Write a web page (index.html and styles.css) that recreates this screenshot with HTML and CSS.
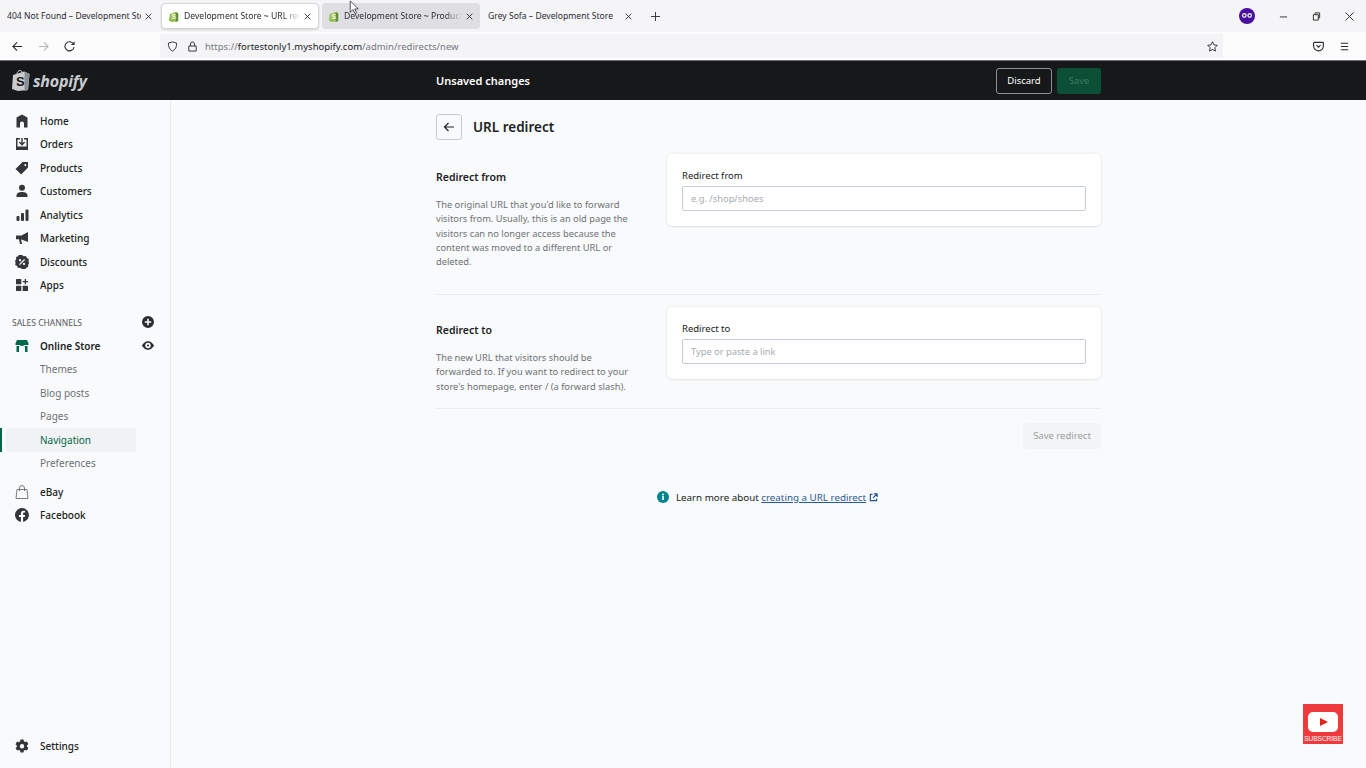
FILE: index.html
```html
<!DOCTYPE html>
<html lang="en">
<head>
    <meta charset="UTF-8">
    <meta name="viewport" content="width=device-width, initial-scale=1.0">
    <title>URL redirect</title>
    <link rel="stylesheet" href="styles.css">
</head>
<body>
    <div class="tabstrip">
        <div class="tab tab-plain tab-first">
            <span class="tab-title">404 Not Found – Development Store</span>
            <svg class="tab-close" viewBox="0 0 10 10"><path d="M1 1l8 8M9 1l-8 8"/></svg>
        </div>
        <div class="tab tab-active">
            <svg class="favicon" viewBox="0 0 12 13"><path d="M1 3.5L8 1l3 1.5V12L3.5 13 0 11.5z" fill="#95bf47"/><path d="M8 1l3 1.500V12l-3 1z" fill="#5e8e3e"/><text x="3" y="10" class="favicon-s">S</text></svg>
            <span class="tab-title tab-fade">Development Store ~ URL redirect</span>
            <svg class="tab-close" viewBox="0 0 10 10"><path d="M1 1l8 8M9 1l-8 8"/></svg>
        </div>
        <div class="tab tab-hover">
            <svg class="favicon" viewBox="0 0 12 13"><path d="M1 3.5L8 1l3 1.500V12L3.500 13 0 11.500z" fill="#95bf47"/><path d="M8 1l3 1.500V12l-3 1z" fill="#5e8e3e"/><text x="3" y="10" class="favicon-s">S</text></svg>
            <span class="tab-title tab-fade">Development Store ~ Products</span>
            <svg class="tab-close" viewBox="0 0 10 10"><path d="M1 1l8 8M9 1l-8 8"/></svg>
        </div>
        <div class="tab tab-plain">
            <span class="tab-title">Grey Sofa – Development Store</span>
            <svg class="tab-close" viewBox="0 0 10 10"><path d="M1 1l8 8M9 1l-8 8"/></svg>
        </div>
        <svg class="new-tab" viewBox="0 0 10 10"><path d="M5 0v10M0 5h10"/></svg>
        <div class="window-controls">
            <svg class="profile" viewBox="0 0 16 16"><circle cx="8" cy="8" r="8" fill="#4a0e9e"/><circle cx="5.300" cy="7.500" r="2.400" fill="#e6e0f2"/><circle cx="10.700" cy="7.500" r="2.400" fill="#e6e0f2"/><circle cx="5.300" cy="7.500" r="1" fill="#1b1033"/><circle cx="10.700" cy="7.500" r="1" fill="#1b1033"/></svg>
            <svg class="win-btn" viewBox="0 0 10 10"><path d="M1 5.500h8"/></svg>
            <svg class="win-btn" viewBox="0 0 10 10"><path d="M1.500 3h5.500v6h-5.500zM3.500 3V1h5v5.500h-1.500"/></svg>
            <svg class="win-btn" viewBox="0 0 10 10"><path d="M.5.500l9 9M9.500.500l-9 9"/></svg>
        </div>
    </div>

    <div class="toolbar">
        <svg class="tool" viewBox="0 0 12 12"><path d="M11 6H1M5.500 1.500L1 6l4.500 4.500"/></svg>
        <svg class="tool tool-off" viewBox="0 0 12 12"><path d="M1 6h10M6.500 1.500L11 6l-4.500 4.500"/></svg>
        <svg class="tool" viewBox="0 0 12 12"><path d="M10.500 3.500A5 5 0 1 0 11 6.500M11 .8v3h-3"/></svg>
        <div class="urlbar">
            <svg class="url-icon" viewBox="0 0 12 12"><path d="M6 1l4.500 1.300c0 4-1 7-4.500 8.700C2.500 9.300 1.500 6.300 1.500 2.300z"/></svg>
            <svg class="url-icon url-lock" viewBox="0 0 12 12"><path d="M2 5.500h8V11H2zM3.800 5.500V3.300a2.200 2.200 0 0 1 4.400 0v2.200"/></svg>
            <span class="url-text">https://<b>fortestonly1.myshopify.com</b>/admin/redirects/new</span>
            <svg class="url-icon url-star" viewBox="0 0 12 12"><path d="M6 .8l1.600 3.400 3.600.5-2.600 2.600.6 3.700L6 9.200 2.800 11l.6-3.700L.8 4.700l3.600-.5z"/></svg>
        </div>
        <svg class="tool tool-pocket" viewBox="0 0 12 12"><path d="M1.500 1.500h9a.8.8 0 0 1 .8.800v3.200a5.300 5.300 0 0 1-10.600 0V2.300a.8.8 0 0 1 .8-.8zM3.800 4.500L6 6.700l2.200-2.200"/></svg>
        <svg class="tool tool-menu" viewBox="0 0 12 12"><path d="M2 2.500h8M2 6h8M2 9.500h8"/></svg>
    </div>

    <header class="topbar">
        <div class="logo">
            <svg class="logo-bag" viewBox="0 0 18 21"><path d="M1 5L12 1.500 17.500 4 16 20 6 21 0 19z" fill="#c9cccf"/><path d="M12.500 1.500L17.500 4 16 20l-3.500 1z" fill="#8c9196"/><path d="M5 5V4c0-2 1.500-3.500 3-3.500S10.500 2 10.500 4" fill="none" stroke="#c9cccf"/><text x="4" y="16" class="logo-s">S</text></svg>
            <span class="logo-text">shopify</span>
        </div>
        <div class="topbar-inner">
            <span class="unsaved">Unsaved changes</span>
            <div class="topbar-actions">
                <button class="btn-discard">Discard</button>
                <button class="btn-save">Save</button>
            </div>
        </div>
    </header>

    <div class="app">
        <nav class="sidebar">
            <a class="nav-item"><svg class="nav-icon" viewBox="0 0 14 14"><path d="M7 .5L12.500 3.500V13.500H9V9.500a2 2 0 0 0-4 0v4H1.500V3.500z"/></svg>Home</a>
            <a class="nav-item"><svg class="nav-icon" viewBox="0 0 14 14"><path fill-rule="evenodd" d="M1 1h4v1.500H2.500v7h9v-7H9V1h4v12H1zM6.300 1h1.400v5l1.500-1.500 1 1L7 8.700 3.800 5.500l1-1L6.300 6z"/></svg>Orders</a>
            <a class="nav-item"><svg class="nav-icon" viewBox="0 0 14 14"><path fill-rule="evenodd" d="M7.500 1H13v5.500L6.200 13.500.5 8zM10.300 3a1 1 0 1 0 .01 0z"/></svg>Products</a>
            <a class="nav-item"><svg class="nav-icon" viewBox="0 0 14 14"><circle cx="7" cy="3.800" r="3"/><path d="M1.500 11.500C1.500 9 4 8 7 8s5.500 1 5.500 3.500v1.500h-11z"/></svg>Customers</a>
            <a class="nav-item"><svg class="nav-icon" viewBox="0 0 14 14"><rect x="1.500" y="8" width="3" height="5" rx="1"/><rect x="6" y="5" width="3" height="8" rx="1"/><rect x="10.500" y="1.500" width="3" height="11.500" rx="1"/></svg>Analytics</a>
            <a class="nav-item"><svg class="nav-icon" viewBox="0 0 14 14"><path d="M13 1v10L6.500 8.500 6 8.400l1 4.600H5L4 8.200H1V4.500h5.500z"/></svg>Marketing</a>
            <a class="nav-item"><svg class="nav-icon" viewBox="0 0 14 14"><path fill-rule="evenodd" d="M7 0l1.800 1.300 2.200-.2.800 2 2 1-.4 2.200 1 1.700-1.300 1.800.1 2.200-2 .8-1 1.900-2.200-.4L7 14l-1.800-1.300-2.200.2-.8-2-2-1 .4-2.200-.6-1.700 1.200-1.800-.1-2.200 2-.8 1-1.900 2.200.4zM9.200 4L4 9.200l.9.900L10 5zM5 4a1.100 1.100 0 1 0 .01 0zM9 7.800a1.100 1.100 0 1 0 .01 0z"/></svg>Discounts</a>
            <a class="nav-item"><svg class="nav-icon" viewBox="0 0 14 14"><rect x="1" y="1" width="5.300" height="5.300" rx=".6"/><rect x="1" y="7.700" width="5.300" height="5.300" rx=".6"/><rect x="7.700" y="7.700" width="5.300" height="5.300" rx=".6"/><path d="M9.700 1h1.300v2h2v1.300h-2v2H9.700v-2h-2V3h2z"/></svg>Apps</a>

            <div class="channels-head">
                <span>SALES CHANNELS</span>
                <svg class="side-action" viewBox="0 0 12 12"><path fill-rule="evenodd" d="M6 0a6 6 0 1 1 0 12A6 6 0 0 1 6 0zM5.200 2.800v2.400H2.800v1.600h2.400v2.400h1.600V6.800h2.400V5.200H6.800V2.800z"/></svg>
            </div>
            <a class="nav-item nav-store"><svg class="nav-icon nav-icon-green" viewBox="0 0 14 14"><path d="M2 1h10l1.500 3.500V6H.500V4.500z"/><path d="M1.500 7h2.500v6H1.500zM10 7h2.500v6H10zM4 7h6v2a3 3 0 0 0-6 0z"/></svg>Online Store
                <svg class="side-action side-eye" viewBox="0 0 14 10"><path fill-rule="evenodd" d="M7 0c3.500 0 6 3 7 5-1 2-3.500 5-7 5S1 7 0 5c1-2 3.500-5 7-5zm0 1.800a3.200 3.200 0 1 0 0 6.400 3.200 3.200 0 0 0 0-6.400zM7 3.800a1.200 1.200 0 1 1 0 2.400 1.200 1.200 0 0 1 0-2.400z"/></svg>
            </a>
            <a class="sub-item">Themes</a>
            <a class="sub-item">Blog posts</a>
            <a class="sub-item">Pages</a>
            <a class="sub-item sub-current">Navigation</a>
            <a class="sub-item">Preferences</a>
            <a class="nav-item nav-ebay"><svg class="nav-icon nav-icon-line" viewBox="0 0 14 14"><path d="M2 4.500h10l1 9H1zM4.500 6V3a2.500 2.500 0 0 1 5 0v3"/></svg>eBay</a>
            <a class="nav-item"><svg class="nav-icon" viewBox="0 0 14 14"><path d="M14 7a7 7 0 1 0-8.100 6.900V9H4V7h1.900V5.500c0-1.800 1-2.700 2.700-2.700.8 0 1.500.1 1.500.1v1.700h-.9c-.8 0-1.100.5-1.100 1V7h2l-.3 2H8.100v4.900A7 7 0 0 0 14 7z"/></svg>Facebook</a>
            <a class="nav-item nav-settings"><svg class="nav-icon" viewBox="0 0 14 14"><path fill-rule="evenodd" d="M5.500.500h3l.4 1.800 1.300.7 1.700-.6 1.500 2.600-1.300 1.200v1.500l1.300 1.200-1.500 2.600-1.700-.6-1.300.7-.4 1.800h-3l-.4-1.800-1.300-.7-1.700.6L.5 9.100l1.300-1.200V6.400L.5 5.200 2 2.600l1.700.6 1.300-.7zM7 5a2.200 2.200 0 1 0 0 4.400A2.200 2.200 0 0 0 7 5z"/></svg>Settings</a>
        </nav>

        <main class="content">
            <div class="page-head">
                <button class="back-btn"><svg viewBox="0 0 12 12"><path d="M11 6H1.500M5.500 2L1.500 6l4 4"/></svg></button>
                <h1>URL redirect</h1>
            </div>

            <section class="form-row form-row-first">
                <div class="form-info">
                    <h2>Redirect from</h2>
                    <p>The original URL that you'd like to forward visitors from. Usually, this is an old page the visitors can no longer access because the content was moved to a different URL or deleted.</p>
                </div>
                <div class="card">
                    <label class="field-label">Redirect from</label>
                    <input class="field-input" placeholder="e.g. /shop/shoes">
                </div>
            </section>

            <section class="form-row">
                <div class="form-info">
                    <h2>Redirect to</h2>
                    <p>The new URL that visitors should be forwarded to. If you want to redirect to your store's homepage, enter / (a forward slash).</p>
                </div>
                <div class="card">
                    <label class="field-label">Redirect to</label>
                    <input class="field-input" placeholder="Type or paste a link">
                </div>
            </section>

            <div class="form-actions">
                <button class="btn-redirect">Save redirect</button>
            </div>

            <div class="learn-more">
                <svg class="info-icon" viewBox="0 0 12 12"><circle cx="6" cy="6" r="6" fill="#00848e"/><rect x="5.200" y="5" width="1.600" height="4" fill="#fff"/><circle cx="6" cy="3.400" r="1" fill="#fff"/></svg>
                <span>Learn more about <a class="learn-link">creating a URL redirect</a></span>
                <svg class="ext-icon" viewBox="0 0 10 10"><path d="M4 1.500H1.500v7h7V6M5.500 1h3.500v3.500M9 1L4.500 5.500"/></svg>
            </div>
        </main>
    </div>

    <svg class="cursor" viewBox="0 0 10 16"><path d="M1 1v12l3-2.800 2 4.300 1.800-.8-2-4.200H9.500z"/></svg>

    <div class="subscribe">
        <svg viewBox="0 0 30 20"><rect width="30" height="20" rx="5" fill="#fff"/><path d="M12 6l8 4-8 4z" fill="#e62117"/></svg>
        <span>SUBSCRIBE</span>
    </div>
</body>
</html>
```

FILE: styles.css
```css
* {
    box-sizing: border-box;
}

html, body {
    height: 100%;
}

body {
    margin: 0;
    font-family: "Noto Sans", "Open Sans", sans-serif;
    font-size: 10px;
    background: #f9fafb;
    color: #202223;
    display: flex;
    flex-direction: column;
    height: 100vh;
    overflow: hidden;
    position: relative;
}

svg {
    display: block;
    flex-shrink: 0;
}

/* browser tabs */
.tabstrip {
    height: 32px;
    background: #f5f5f7;
    display: flex;
    align-items: center;
    flex-shrink: 0;
}

.tab {
    height: 26px;
    display: flex;
    align-items: center;
    width: 158px;
    padding: 0 7px;
    margin-right: 2px;
    font-size: 9px;
    border-radius: 4px;
    color: #2b2a33;
    white-space: nowrap;
}

.tab-first {
    width: 159px;
}

.tab-active {
    background: #fff;
    border: 1px solid #d6d6da;
    box-shadow: 0 1px 2px rgba(0, 0, 0, 0.15);
}

.tab-hover {
    background: #dfdfe3;
    margin-left: 1px;
    margin-right: 1px;
}

.tab-title {
    flex: 1;
    overflow: hidden;
    font-size: 8.6px;
}

.tab-fade {
    -webkit-mask-image: linear-gradient(to right, #000 85%, transparent);
    mask-image: linear-gradient(to right, #000 85%, transparent);
}

.tab-close {
    width: 7px;
    height: 7px;
    margin-left: 4px;
    fill: none;
    stroke: #222;
    stroke-width: 1.2;
}

.favicon {
    width: 10px;
    height: 11px;
    margin-right: 5px;
}

.favicon-s {
    font-size: 8px;
    font-weight: 700;
    fill: #fff;
    font-family: "Liberation Sans", sans-serif;
}

.new-tab {
    width: 9px;
    height: 9px;
    margin-left: 10px;
    fill: none;
    stroke: #2b2a33;
}

.window-controls {
    margin-left: auto;
    display: flex;
    align-items: center;
}

.profile {
    width: 16px;
    height: 16px;
    margin-right: 24px;
}

.win-btn {
    width: 9px;
    height: 9px;
    margin-right: 24px;
    fill: none;
    stroke: #222;
    stroke-width: 1;
}

.win-btn:last-child {
    margin-right: 12px;
}

/* browser toolbar */
.toolbar {
    height: 28px;
    background: #fcfcfd;
    display: flex;
    align-items: center;
    padding-left: 12px;
    flex-shrink: 0;
}

.tool {
    width: 11px;
    height: 11px;
    margin-right: 15px;
    fill: none;
    stroke: #2b2a33;
    stroke-width: 1.200;
}

.tool-off {
    stroke: #b8b8bc;
}

.urlbar {
    width: 1063px;
    height: 24px;
    margin-left: 64px;
    margin-left: 75px;
    background: #f4f4f7;
    display: flex;
    align-items: center;
    padding-left: 7px;
    margin-left: 70px;
}

.url-icon {
    width: 11px;
    height: 11px;
    fill: none;
    stroke: #2b2a33;
    stroke-width: 1;
}

.url-lock {
    margin-left: 9px;
    margin-right: 7px;
}

.url-text {
    font-size: 9.500px;
    color: #77777d;
}

.url-text b {
    font-weight: 400;
    color: #202124;
}

.url-star {
    margin-left: auto;
    margin-right: 5px;
}

.tool-pocket {
    margin-left: 90px;
    margin-right: 15px;
}

.tool-menu {
    margin-right: 0;
}

/* dark bar */
.topbar {
    height: 40px;
    background: #16181a;
    border-top: 1px solid #6d7175;
    display: flex;
    align-items: center;
    flex-shrink: 0;
    position: relative;
}

.logo {
    width: 170px;
    display: flex;
    align-items: center;
    padding-left: 12px;
    color: #c9cccf;
    gap: 3px;
}

.logo-bag {
    width: 18px;
    height: 21px;
}

.logo-s {
    font-size: 13px;
    font-weight: 700;
    fill: #16181a;
    font-family: "Liberation Sans", sans-serif;
}

.logo-text {
    font-family: "Open Sans", sans-serif;
    font-size: 16px;
    font-weight: 700;
    font-style: italic;
    letter-spacing: -0.200px;
}

.topbar-inner {
    width: 665px;
    margin-left: 266px;
    display: flex;
    align-items: center;
    justify-content: space-between;
}

.unsaved {
    color: #fff;
    font-size: 11px;
    font-weight: 600;
}

.topbar-actions {
    display: flex;
    gap: 5px;
}

.btn-discard, .btn-save {
    font-family: inherit;
    font-size: 9.500px;
    height: 26px;
    border-radius: 3px;
}

.btn-discard {
    width: 56px;
    background: transparent;
    border: 1px solid #8c9196;
    color: #fff;
}

.btn-save {
    width: 44px;
    background: #0b4f37;
    border: none;
    color: #3f7a62;
}

/* admin layout */
.app {
    flex: 1;
    display: flex;
    min-height: 0;
}

.sidebar {
    width: 171px;
    flex-shrink: 0;
    border-right: 1px solid #ebecee;
    padding-top: 9px;
    padding-bottom: 10px;
    display: flex;
    flex-direction: column;
}

.nav-item {
    height: 23.500px;
    display: flex;
    align-items: center;
    padding-left: 15px;
    font-size: 10px;
    font-weight: 500;
    color: #202223;
}

.nav-icon {
    width: 14px;
    height: 14px;
    margin-right: 11px;
    fill: #33373b;
}

.nav-icon-green {
    fill: #00684a;
}

.nav-icon-line {
    fill: none;
    stroke: #5c5f62;
    stroke-width: 0.800;
}

.channels-head {
    height: 24px;
    margin-top: 13px;
    padding: 0 16px 0 12px;
    display: flex;
    align-items: center;
    justify-content: space-between;
    font-size: 8.500px;
    color: #54575a;
}

.side-action {
    width: 12px;
    height: 12px;
    fill: #2b2e30;
}

.side-eye {
    height: 9px;
    margin-left: auto;
    margin-right: 16px;
}

.nav-store {
    font-weight: 600;
}

.sub-item {
    height: 23.500px;
    display: flex;
    align-items: center;
    padding-left: 40px;
    font-size: 10px;
    color: #6d7175;
    position: relative;
}

.sub-current {
    color: #00684a;
    background: #f1f2f3;
    margin-left: 6px;
    margin-right: 34px;
    padding-left: 34px;
    border-radius: 3px;
}

.sub-current::before {
    content: "";
    position: absolute;
    left: -6px;
    top: 0;
    bottom: 0;
    width: 2px;
    background: #00684a;
}

.nav-ebay {
    margin-top: 5px;
}

.nav-settings {
    margin-top: auto;
}

/* main column */
.content {
    flex: 1;
    display: flex;
    flex-direction: column;
    align-items: center;
}

.page-head, .form-row, .form-actions {
    width: 665px;
}

.page-head {
    height: 42px;
    padding-top: 12px;
    display: flex;
    align-items: center;
    gap: 11px;
}

.back-btn {
    width: 26px;
    height: 26px;
    padding: 0;
    background: transparent;
    border: 1px solid #c9cccf;
    border-radius: 3px;
    display: flex;
    align-items: center;
    justify-content: center;
}

.back-btn svg {
    width: 12px;
    height: 12px;
    fill: none;
    stroke: #202223;
    stroke-width: 1.200;
}

h1 {
    margin: 0;
    font-size: 13.500px;
    font-weight: 600;
}

.form-row {
    display: flex;
    border-bottom: 1px solid #ebecee;
    padding: 12px 0 14px;
    align-items: flex-start;
}

.form-row-first {
    height: 153px;
}

.form-info {
    width: 231px;
    padding-right: 35px;
    padding-top: 15px;
}

h2 {
    margin: 0 0 13px;
    font-size: 10.500px;
    line-height: 16px;
    font-weight: 600;
}

.form-info p {
    margin: 0;
    font-size: 9.300px;
    line-height: 14.300px;
    color: #6d7175;
}

.card {
    width: 434px;
    background: #fff;
    border-radius: 5px;
    padding: 14px 15px 15px;
    box-shadow: 0 0 3px rgba(23, 24, 24, 0.1), 0 1px 2px rgba(0, 0, 0, 0.06);
}

.field-label {
    display: block;
    font-size: 9.500px;
    line-height: 16px;
    margin-bottom: 2px;
}

.field-input {
    display: block;
    width: 100%;
    height: 25px;
    border: 1px solid #c4cdd5;
    border-radius: 2px;
    padding: 0 8px;
    font-family: inherit;
    font-size: 9.300px;
    background: #fff;
    outline: none;
}

.field-input::placeholder {
    color: #a6acb2;
}

.form-actions {
    display: flex;
    justify-content: flex-end;
    padding-top: 14px;
}

.btn-redirect {
    height: 26px;
    width: 78px;
    background: #f3f4f5;
    border: none;
    border-radius: 3px;
    font-family: inherit;
    font-size: 9.500px;
    color: #9a9ea3;
}

.learn-more {
    margin-top: 42px;
    display: flex;
    align-items: center;
    font-size: 9.800px;
    padding-right: 2px;
}

.info-icon {
    width: 12px;
    height: 12px;
    margin-right: 7px;
}

.learn-link {
    color: #2c5a94;
    text-decoration: underline;
}

.ext-icon {
    width: 9px;
    height: 9px;
    margin-left: 3px;
    fill: none;
    stroke: #1f5199;
    stroke-width: 1.300;
}

/* things lying over the page */
.cursor {
    position: absolute;
    left: 349px;
    top: 0;
    width: 10px;
    height: 15px;
    fill: #fff;
    stroke: #222;
    stroke-width: 0.800;
}

.subscribe {
    position: absolute;
    left: 1303px;
    top: 704px;
    width: 40px;
    height: 40px;
    background: #ee3a3c;
    display: flex;
    flex-direction: column;
    align-items: center;
    padding-top: 8px;
}

.subscribe svg {
    width: 30px;
    height: 20px;
}

.subscribe span {
    font-family: "Liberation Sans", sans-serif;
    font-size: 6.500px;
    color: #fff;
    line-height: 8px;
    margin-top: 3px;
    white-space: nowrap;
}
```
